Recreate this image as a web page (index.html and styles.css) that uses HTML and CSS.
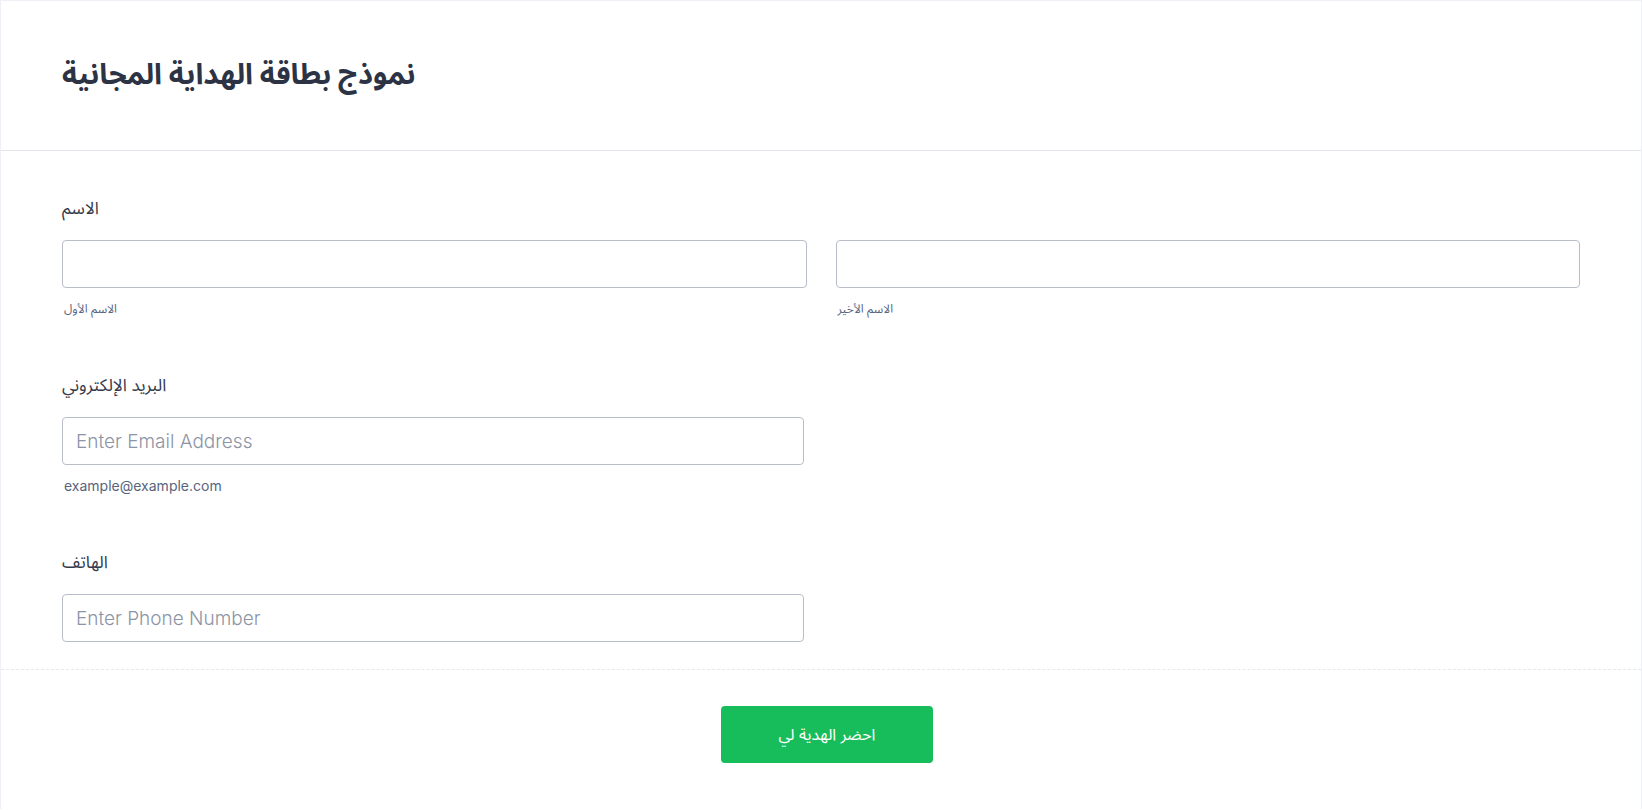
FILE: index.html
```html
<!DOCTYPE html>
<html lang="ar">
<head>
    <meta charset="UTF-8">
    <meta name="viewport" content="width=device-width, initial-scale=1.0">
    <title>نموذج بطاقة الهداية المجانية</title>
    <link rel="stylesheet" href="styles.css">
</head>
<body>
    <form class="form-card" onsubmit="return false">
        <div class="form-header">
            <h1>نموذج بطاقة الهداية المجانية</h1>
        </div>
        <div class="form-fields">
            <div class="field">
                <label class="field-label">الاسم</label>
                <div class="name-row">
                    <div>
                        <input type="text" class="text-input">
                        <span class="sub-label">الاسم الأول</span>
                    </div>
                    <div>
                        <input type="text" class="text-input">
                        <span class="sub-label">الاسم الأخير</span>
                    </div>
                </div>
            </div>
            <div class="field">
                <label class="field-label">البريد الإلكتروني</label>
                <input type="email" class="text-input half" placeholder="Enter Email Address">
                <span class="hint">example@example.com</span>
            </div>
            <div class="field">
                <label class="field-label">الهاتف</label>
                <input type="tel" class="text-input half" placeholder="Enter Phone Number">
            </div>
        </div>
        <div class="form-footer">
            <button type="submit" class="submit-btn">احضر الهدية لي</button>
        </div>
    </form>
</body>
</html>
```

FILE: styles.css
```css
body {
    margin: 0;
    font-family: Inter, "Noto Sans Arabic", "DejaVu Sans", sans-serif;
    background-color: #fff;
    color: #2c3345;
}
.form-card {
    border: 1px solid #eef0f5;
    border-bottom: none;
    min-height: 809px;
    box-sizing: border-box;
}
.form-header {
    height: 147px;
    padding: 0 61px 2px;
    display: flex;
    align-items: center;
    border-bottom: 1px solid #e3e5eb;
}
.form-header h1 {
    margin: 0;
    font-size: 29px;
    font-weight: bold;
    color: #2c3345;
}
.form-fields {
    padding: 45px 61px 27px;
}
.field + .field {
    margin-top: 55px;
}
.field-label {
    display: block;
    font-size: 17px;
    line-height: 24px;
    margin-bottom: 20px;
    color: #333a4b;
}
.name-row {
    display: grid;
    grid-template-columns: 1fr 1fr;
    gap: 29px;
}
.text-input {
    display: block;
    box-sizing: border-box;
    width: 100%;
    height: 48px;
    padding: 0 13px;
    border: 1px solid #b8bdc9;
    border-radius: 4px;
    font-family: Inter, sans-serif;
    font-size: 19px;
    font-weight: 300;
    color: #2c3345;
    background: #fff;
}
.text-input::placeholder {
    color: #8c94a5;
}
.text-input.half {
    width: 742px;
}
.sub-label {
    display: block;
    margin-top: 12px;
    padding-left: 2px;
    font-size: 12px;
    line-height: 18px;
    color: #57647e;
}
.hint {
    display: block;
    margin-top: 12px;
    padding-left: 2px;
    font-size: 14px;
    line-height: 18px;
    color: #57647e;
}
.form-footer {
    border-top: 1px dashed #e6e8f0;
    padding: 36px 0 0 12px;
    display: flex;
    justify-content: center;
}
.submit-btn {
    width: 212px;
    height: 57px;
    background-color: #18bd5b;
    color: #fff;
    border: none;
    border-radius: 4px;
    font-family: Inter, "Noto Sans Arabic", "DejaVu Sans", sans-serif;
    font-size: 16px;
    cursor: pointer;
}
.submit-btn:hover {
    background-color: #16aa52;
}
```
